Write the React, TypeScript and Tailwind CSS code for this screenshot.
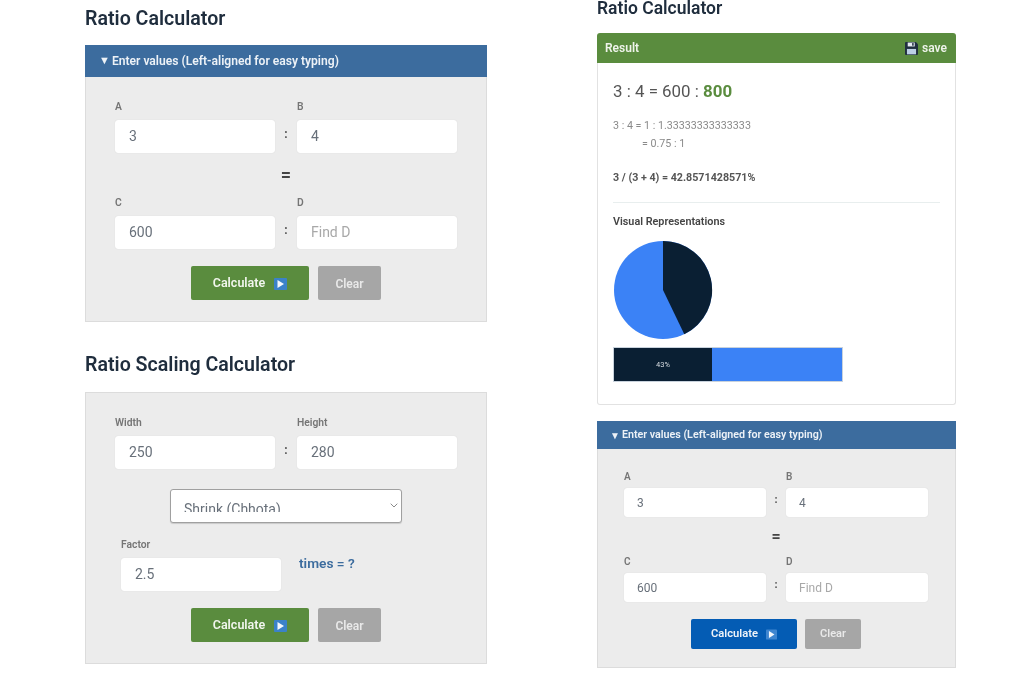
const PlayBox = ({ small }: { small?: boolean }) => (
  <svg className={small ? "w-[11px] h-[11px]" : "w-[13px] h-[12px]"} viewBox="0 0 13 12">
    <rect width="13" height="12" rx="1" fill={small ? "#3f86d0" : "#3b82c8"} />
    <path d="M3.5 2 L10 6 L3.5 10 Z" fill="#f4f8fc" />
  </svg>
);

const FloppyIcon = () => (
  <svg className="w-[13px] h-[13px]" viewBox="0 0 12 12">
    <path d="M0 1 Q0 0 1 0 H10 L12 2 V11 Q12 12 11 12 H1 Q0 12 0 11 Z" fill="#1f2f3f" />
    <rect x="2.5" y="0.5" width="6.5" height="3.6" fill="#e4ebf2" />
    <rect x="6.6" y="1" width="1.4" height="2.4" fill="#1f2f3f" />
    <rect x="1.8" y="6.4" width="8.4" height="5" fill="#bcd0e6" />
  </svg>
);

const Chevron = () => (
  <svg className="absolute right-[3px] top-[13px] w-[8px] h-[5px] pointer-events-none" viewBox="0 0 8 5">
    <path d="M0.7 0.7 L4 4 L7.3 0.7" fill="none" stroke="#8a8a8a" strokeWidth="1" />
  </svg>
);

const Heading = ({ children }: { children: string }) => (
  <h2 className="text-[19.6px] leading-[24px] font-semibold text-[#1f2d3d]">{children}</h2>
);

const BigField = ({ label, value, placeholder }: { label: string; value?: string; placeholder?: string }) => (
  <div className="w-[160px]">
    <div className="h-[13px] mb-[7px] text-[10.3px] leading-[13px] font-semibold text-[#757575]">{label}</div>
    <input
      readOnly
      value={value ?? ""}
      placeholder={placeholder}
      className="block w-[160px] h-[33px] pl-[14px] pb-[1px] bg-white rounded-[3px] shadow-[0_0_1px_rgba(0,0,0,0.15)] text-[14px] text-[#68707a] placeholder:text-[#a8a8a8] outline-none"
    />
  </div>
);

const SmallField = ({ label, value, placeholder }: { label: string; value?: string; placeholder?: string }) => (
  <div className="w-[142px]">
    <div className="h-[12px] mb-[5px] text-[10px] leading-[12px] font-semibold text-[#757575]">{label}</div>
    <input
      readOnly
      value={value ?? ""}
      placeholder={placeholder}
      className="block w-[142px] h-[29px] pl-[13px] bg-white rounded-[3px] shadow-[0_0_1px_rgba(0,0,0,0.15)] text-[12px] text-[#68707a] placeholder:text-[#a8a8a8] outline-none"
    />
  </div>
);

const BigColon = () => (
  <div className="w-[22px] h-[33px] flex items-center justify-center self-end text-[12px] font-bold text-[#555] pb-[5px]">:</div>
);

const SmallColon = () => (
  <div className="w-[20px] h-[29px] flex items-center justify-center self-end text-[11px] font-bold text-[#555] pb-[4px]">:</div>
);

const BigButtons = () => (
  <div className="flex justify-center gap-[9px]">
    <button className="w-[118px] h-[34px] pt-[1px] flex items-center justify-center gap-[9px] bg-[#5a8c3e] rounded-[2px] text-[12.5px] font-semibold text-[#f2f6ee]">
      Calculate
      <PlayBox />
    </button>
    <button className="w-[63px] h-[34px] pt-[1px] bg-[#a6a6a6] rounded-[2px] text-[12px] font-semibold text-[#e9e9e9]">Clear</button>
  </div>
);

const BlueHeader = ({ small }: { small?: boolean }) => (
  <div
    className={
      small
        ? "h-[28px] pl-[13px] flex items-center bg-[#3c6c9e] text-[10.7px] font-semibold text-[#edf2f7]"
        : "h-[32px] pl-[14px] flex items-center bg-[#3c6c9e] text-[12.1px] font-semibold text-[#edf2f7]"
    }
  >
    <span className={small ? "mr-[2px] text-[10px]" : "mr-[2px] text-[11px]"}>▼</span>
    Enter values (Left-aligned for easy typing)
  </div>
);

const LeftCalculator = () => (
  <div className="w-[402px]">
    <BlueHeader />
    <div className="h-[245px] bg-[#ececec] border border-t-0 border-[#dcdcdc] pt-[23px] pl-[29px]">
      <div className="flex">
        <BigField label="A" value="3" />
        <BigColon />
        <BigField label="B" value="4" />
      </div>
      <div className="w-[342px] h-[43px] flex items-center justify-center text-[18px] font-bold text-[#444]">=</div>
      <div className="flex">
        <BigField label="C" value="600" />
        <BigColon />
        <BigField label="D" placeholder="Find D" />
      </div>
      <div className="w-[342px] mt-[17px]">
        <BigButtons />
      </div>
    </div>
  </div>
);

const ScalingCalculator = () => (
  <div className="w-[402px] h-[272px] bg-[#ececec] border border-[#dcdcdc] pt-[23px] pl-[29px]">
    <div className="flex">
      <BigField label="Width" value="250" />
      <BigColon />
      <BigField label="Height" value="280" />
    </div>
    <div className="w-[342px] flex justify-center mt-[20px]">
      <div className="relative w-[232px] h-[34px] bg-white rounded-[3px] border border-[#a0a0a0] shadow-[0_1px_1px_rgba(0,0,0,0.15)]">
        <select className="appearance-none block w-full h-[22px] pl-[13px] pt-[9px] bg-transparent text-[14px] text-[#68707a] outline-none">
          <option>Shrink (Chhota)</option>
        </select>
        <Chevron />
      </div>
    </div>
    <div className="flex mt-[15px] ml-[6px]">
      <BigField label="Factor" value="2.5" />
      <div className="ml-[18px] mt-[17px] text-[13.7px] leading-[16px] font-semibold text-[#3c6c9e]">times = ?</div>
    </div>
    <div className="w-[342px] mt-[17px]">
      <BigButtons />
    </div>
  </div>
);

const ResultCard = () => (
  <div className="w-[359px]">
    <div className="h-[30px] pl-[8px] pr-[9px] flex items-center justify-between bg-[#5a8c3e] rounded-t-[3px] text-[12px] font-semibold text-[#eef3ea]">
      <span>Result</span>
      <span className="flex items-center gap-[4px]">
        <FloppyIcon />
        save
      </span>
    </div>
    <div className="h-[342px] bg-white border border-t-0 border-[#e2e2e2] rounded-b-[3px] pl-[15px] pr-[15px]">
      <div className="pt-[18px] text-[16.9px] leading-[20px] text-[#555]">
        3 : 4 = 600 : <span className="font-bold text-[#5a8c3e]">800</span>
      </div>
      <div className="mt-[16px] text-[10.7px] leading-[18px] text-[#8a8a8a]">
        <div>3 : 4 = 1 : 1.33333333333333</div>
        <div className="pl-[29px]">= 0.75 : 1</div>
      </div>
      <div className="mt-[16px] text-[10.7px] leading-[18px] font-bold text-[#555]">3 / (3 + 4) = 42.8571428571%</div>
      <div className="mt-[15px] border-t border-[#e8eeee]" />
      <div className="mt-[12px] text-[10.8px] leading-[14px] font-semibold text-[#444]">Visual Representations</div>
      <svg className="block mt-[11px] w-[100px] h-[100px]" viewBox="0 0 100 100">
        <circle cx="50" cy="50" r="49" fill="#3b82f6" />
        <path d="M50 50 L50 1 A49 49 0 0 1 71.3 94.2 Z" fill="#0a1f33" />
      </svg>
      <div className="mt-[7px] w-[230px] h-[35px] flex bg-[#3b82f6] border border-[#c8d2dc]">
        <div className="w-[98px] flex items-center justify-center bg-[#0a1f33] text-[7.5px] text-[#d8dde2]">43%</div>
      </div>
    </div>
  </div>
);

const RightCalculator = () => (
  <div className="w-[359px]">
    <BlueHeader small />
    <div className="h-[219px] bg-[#ececec] border border-t-0 border-[#dcdcdc] pt-[22px] pl-[26px]">
      <div className="flex">
        <SmallField label="A" value="3" />
        <SmallColon />
        <SmallField label="B" value="4" />
      </div>
      <div className="w-[304px] h-[39px] flex items-center justify-center text-[16px] font-bold text-[#444]">=</div>
      <div className="flex">
        <SmallField label="C" value="600" />
        <SmallColon />
        <SmallField label="D" placeholder="Find D" />
      </div>
      <div className="flex justify-center gap-[8px] w-[304px] mt-[17px]">
        <button className="w-[106px] h-[30px] flex items-center justify-center gap-[8px] bg-[#045cb4] rounded-[2px] text-[11.2px] font-semibold text-[#eef3f9]">
          Calculate
          <PlayBox small />
        </button>
        <button className="w-[56px] h-[30px] bg-[#a6a6a6] rounded-[2px] text-[11px] font-semibold text-[#e9e9e9]">Clear</button>
      </div>
    </div>
  </div>
);

export default function App() {
  return (
    <div className="w-[1024px] h-[683px] flex bg-white overflow-hidden font-['Roboto',sans-serif] blur-[0.4px]">
      <div className="ml-[85px] w-[402px]">
        <div className="mt-[7px] mb-[14px]">
          <Heading>Ratio Calculator</Heading>
        </div>
        <LeftCalculator />
        <div className="mt-[31px] mb-[15px]">
          <Heading>Ratio Scaling Calculator</Heading>
        </div>
        <ScalingCalculator />
      </div>
      <div className="ml-[110px] w-[359px]">
        <h2 className="mb-[17px] text-[17.5px] leading-[16px] font-semibold text-[#1f2d3d]">Ratio Calculator</h2>
        <ResultCard />
        <div className="mt-[16px]">
          <RightCalculator />
        </div>
      </div>
    </div>
  );
}
